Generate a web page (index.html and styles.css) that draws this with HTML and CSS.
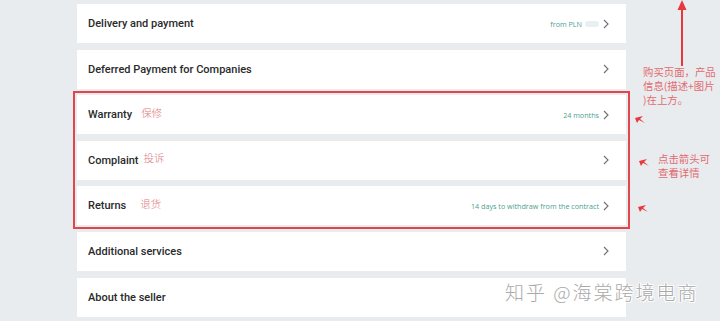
FILE: index.html
```html
<!DOCTYPE html>
<html lang="en">
<head>
    <meta charset="UTF-8">
    <meta name="viewport" content="width=device-width, initial-scale=1.0">
    <title>Product details</title>
    <link rel="stylesheet" href="styles.css">
</head>
<body>

    <div class="page">
        <!-- 详情列表 -->
        <div class="list">
            <div class="row">
                <span class="title">Delivery and payment</span>
                <span class="meta">from PLN <span class="blur"></span></span>
                <svg class="chev" width="6" height="10" viewBox="0 0 6 10"><path d="M1 1 L5 5 L1 9" /></svg>
            </div>
            <div class="row">
                <span class="title">Deferred Payment for Companies</span>
                <svg class="chev" width="6" height="10" viewBox="0 0 6 10"><path d="M1 1 L5 5 L1 9" /></svg>
            </div>

            <!-- 红框部分 -->
            <div class="group">
                <div class="row">
                    <span class="title">Warranty</span>
                    <span class="note note-a">保修</span>
                    <span class="meta">24 months</span>
                    <svg class="chev" width="6" height="10" viewBox="0 0 6 10"><path d="M1 1 L5 5 L1 9" /></svg>
                </div>
                <div class="row">
                    <span class="title">Complaint</span>
                    <span class="note note-b">投诉</span>
                    <svg class="chev" width="6" height="10" viewBox="0 0 6 10"><path d="M1 1 L5 5 L1 9" /></svg>
                </div>
                <div class="row">
                    <span class="title">Returns</span>
                    <span class="note note-c">退货</span>
                    <span class="meta">14 days to withdraw from the contract</span>
                    <svg class="chev" width="6" height="10" viewBox="0 0 6 10"><path d="M1 1 L5 5 L1 9" /></svg>
                </div>
            </div>

            <div class="row">
                <span class="title">Additional services</span>
                <svg class="chev" width="6" height="10" viewBox="0 0 6 10"><path d="M1 1 L5 5 L1 9" /></svg>
            </div>
            <div class="row">
                <span class="title">About the seller</span>
            </div>
        </div>

        <!-- 右侧批注 -->
        <svg class="up-arrow" width="12" height="68" viewBox="0 0 12 68">
            <path d="M6 66 L6 8" stroke="#e8383d" stroke-width="2" fill="none"/>
            <path d="M6 0 L10.5 10 L1.5 10 Z" fill="#e8383d"/>
        </svg>
        <div class="memo memo-top">购买页面，产品<br>信息(描述+图片<br>)在上方。</div>
        <div class="memo memo-mid">点击箭头可<br>查看详情</div>

        <svg class="tip tip-1" width="10" height="8" viewBox="0 0 10 8"><path d="M0 2 L8 0 L5 3 L10 7 L4 4 L2 7 Z" fill="#e8383d"/></svg>
        <svg class="tip tip-2" width="10" height="8" viewBox="0 0 10 8"><path d="M0 2 L8 0 L5 3 L10 7 L4 4 L2 7 Z" fill="#e8383d"/></svg>
        <svg class="tip tip-3" width="10" height="8" viewBox="0 0 10 8"><path d="M0 2 L8 0 L5 3 L10 7 L4 4 L2 7 Z" fill="#e8383d"/></svg>

        <div class="watermark">知乎 @海棠跨境电商</div>
    </div>

</body>
</html>
```

FILE: styles.css
```css
* {
    margin: 0;
    padding: 0;
    box-sizing: border-box;
}

body {
    font-family: Roboto, "Noto Sans", Arial, sans-serif;
    background-color: #e9ecef;
    height: 321px;
    overflow: hidden;
}

.page {
    position: relative;
    height: 100%;
    padding: 4px 0 0 77px;
}

.list {
    width: 549px;
    display: flex;
    flex-direction: column;
    gap: 6.6px;
}

.group {
    display: flex;
    flex-direction: column;
    gap: 6.6px;
    outline: 2px solid #e0464c;
    outline-offset: 2px;
}

.row {
    height: 39px;
    background-color: #ffffff;
    display: flex;
    align-items: center;
    padding: 0 17px 0 11px;
}

.title {
    font-size: 11px;
    font-weight: 500;
    color: #2a2a2a;
}

.note {
    font-family: "Noto Sans CJK SC", sans-serif;
    font-size: 10.5px;
    font-weight: 300;
    color: #e27b80;
    margin-left: 9px;
    margin-top: -5px;
}

.note-b {
    margin-left: 5px;
}

.note-c {
    margin-left: 14px;
}

.meta {
    margin-left: auto;
    font-family: "Open Sans", sans-serif;
    font-size: 7.2px;
    color: #4a9f91;
    display: flex;
    align-items: center;
}

.blur {
    display: inline-block;
    width: 14px;
    height: 6px;
    margin-left: 3px;
    border-radius: 3px;
    background-color: #e8eff1;
}

.chev {
    margin-left: auto;
    fill: none;
    stroke: #6f6f6f;
    stroke-width: 1.1;
}

.meta + .chev {
    margin-left: 4px;
}

.up-arrow {
    position: absolute;
    left: 676px;
    top: 0;
}

.memo {
    position: absolute;
    font-family: "Noto Sans CJK SC", sans-serif;
    font-size: 10.4px;
    line-height: 14px;
    color: #e36a6e;
    white-space: nowrap;
}

.memo-top {
    left: 643px;
    top: 65px;
}

.memo-mid {
    left: 658px;
    top: 152px;
}

.tip {
    position: absolute;
}

.tip-1 {
    left: 635px;
    top: 116px;
}

.tip-2 {
    left: 639px;
    top: 159px;
}

.tip-3 {
    left: 638px;
    top: 205px;
}

.watermark {
    position: absolute;
    left: 505px;
    top: 278px;
    font-family: "Noto Sans CJK SC", sans-serif;
    font-size: 19px;
    font-weight: 300;
    letter-spacing: 2px;
    color: #a9a9a9;
    text-shadow: 1px 1px 0 #ffffff, -1px -1px 0 #ffffff, 1px -1px 0 #ffffff, -1px 1px 0 #ffffff;
}
```
